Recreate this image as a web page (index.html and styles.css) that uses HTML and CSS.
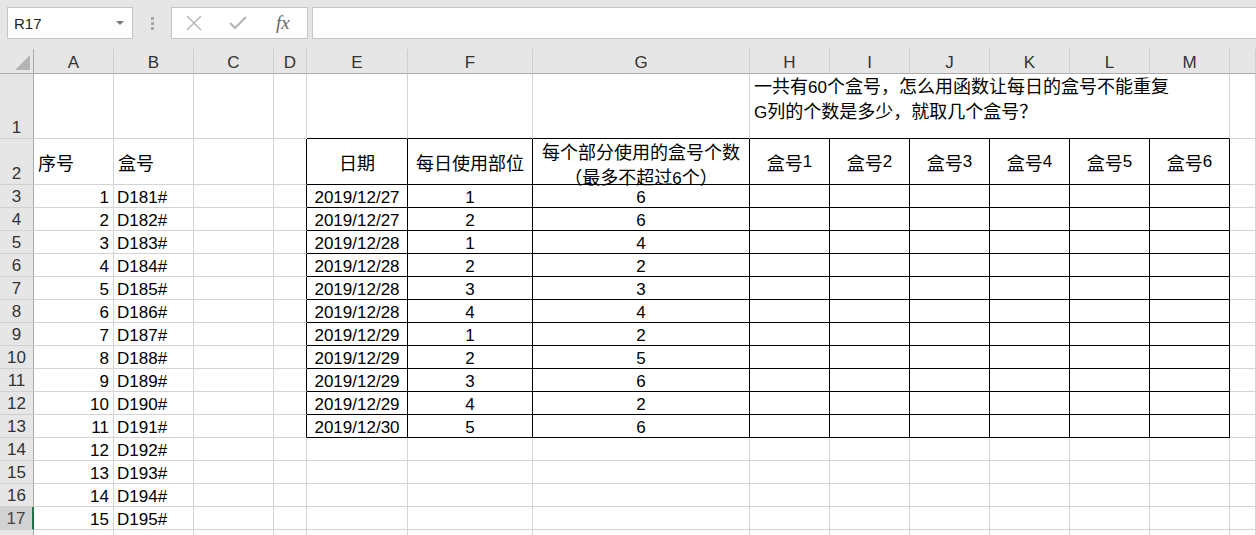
FILE: index.html
```html
<!DOCTYPE html>
<html lang="zh-CN">
<head>
<meta charset="utf-8">
<title>Sheet</title>
<link rel="stylesheet" href="styles.css">
</head>
<body>
<div class="app">
  <div class="toolbar">
    <div class="namebox"><span class="ref">R17</span><span class="caret"></span></div>
    <div class="grip"><i></i><i></i><i></i></div>
    <div class="fxbox">
      <svg class="ico" width="18" height="18" viewBox="0 0 18 18"><path d="M2 2 L16 16 M16 2 L2 16" stroke="#b3b3b3" stroke-width="1.4" fill="none"/></svg>
      <svg class="ico" width="20" height="18" viewBox="0 0 20 18"><path d="M2 9 L7 14 L18 3" stroke="#b3b3b3" stroke-width="2" fill="none"/></svg>
      <span class="fx">fx</span>
    </div>
    <div class="formula"></div>
  </div>

  <div class="sheet">
    <div class="row hdr">
      <div class="corner"><span class="tri"></span></div>
      <div class="ch">A</div><div class="ch">B</div><div class="ch">C</div><div class="ch">D</div><div class="ch">E</div><div class="ch">F</div><div class="ch">G</div><div class="ch">H</div><div class="ch">I</div><div class="ch">J</div><div class="ch">K</div><div class="ch">L</div><div class="ch">M</div><div class="ch"></div>
    </div>

    <div class="row r1">
      <div class="rh">1</div>
      <div class="c"></div><div class="c"></div><div class="c"></div><div class="c"></div>
      <div class="c tb"></div><div class="c tb"></div><div class="c tb"></div>
      <div class="c tb note"><div><span class="zh">一共有</span>60<span class="zh">个盒号，怎么用函数让每日的盒号不能重复</span></div><div>G<span class="zh">列的个数是多少，就取几个盒号？</span></div></div>
      <div class="c"></div>
    </div>

    <div class="row r2">
      <div class="rh">2</div>
      <div class="c mid"><span class="zh">序号</span></div>
      <div class="c mid"><span class="zh">盒号</span></div>
      <div class="c"></div>
      <div class="c tl"></div>
      <div class="c t ctr mid2"><span class="zh">日期</span></div>
      <div class="c t ctr mid2"><span class="zh">每日使用部位</span></div>
      <div class="c t two"><div><span class="zh">每个部分使用的盒号个数</span></div><div><span class="zh">（最多不超过</span>6<span class="zh">个）</span></div></div>
      <div class="c t ctr mid2"><span class="zh">盒号</span>1</div>
      <div class="c t ctr mid2"><span class="zh">盒号</span>2</div>
      <div class="c t ctr mid2"><span class="zh">盒号</span>3</div>
      <div class="c t ctr mid2"><span class="zh">盒号</span>4</div>
      <div class="c t ctr mid2"><span class="zh">盒号</span>5</div>
      <div class="c t ctr mid2"><span class="zh">盒号</span>6</div>
      <div class="c"></div>
    </div>

    <div class="row">
      <div class="rh">3</div><div class="c num">1</div><div class="c txt">D181#</div><div class="c"></div><div class="c tl"></div>
      <div class="c t ctr">2019/12/27</div><div class="c t ctr">1</div><div class="c t ctr">6</div>
      <div class="c t"></div><div class="c t"></div><div class="c t"></div><div class="c t"></div><div class="c t"></div><div class="c t"></div><div class="c"></div>
    </div>
    <div class="row">
      <div class="rh">4</div><div class="c num">2</div><div class="c txt">D182#</div><div class="c"></div><div class="c tl"></div>
      <div class="c t ctr">2019/12/27</div><div class="c t ctr">2</div><div class="c t ctr">6</div>
      <div class="c t"></div><div class="c t"></div><div class="c t"></div><div class="c t"></div><div class="c t"></div><div class="c t"></div><div class="c"></div>
    </div>
    <div class="row">
      <div class="rh">5</div><div class="c num">3</div><div class="c txt">D183#</div><div class="c"></div><div class="c tl"></div>
      <div class="c t ctr">2019/12/28</div><div class="c t ctr">1</div><div class="c t ctr">4</div>
      <div class="c t"></div><div class="c t"></div><div class="c t"></div><div class="c t"></div><div class="c t"></div><div class="c t"></div><div class="c"></div>
    </div>
    <div class="row">
      <div class="rh">6</div><div class="c num">4</div><div class="c txt">D184#</div><div class="c"></div><div class="c tl"></div>
      <div class="c t ctr">2019/12/28</div><div class="c t ctr">2</div><div class="c t ctr">2</div>
      <div class="c t"></div><div class="c t"></div><div class="c t"></div><div class="c t"></div><div class="c t"></div><div class="c t"></div><div class="c"></div>
    </div>
    <div class="row">
      <div class="rh">7</div><div class="c num">5</div><div class="c txt">D185#</div><div class="c"></div><div class="c tl"></div>
      <div class="c t ctr">2019/12/28</div><div class="c t ctr">3</div><div class="c t ctr">3</div>
      <div class="c t"></div><div class="c t"></div><div class="c t"></div><div class="c t"></div><div class="c t"></div><div class="c t"></div><div class="c"></div>
    </div>
    <div class="row">
      <div class="rh">8</div><div class="c num">6</div><div class="c txt">D186#</div><div class="c"></div><div class="c tl"></div>
      <div class="c t ctr">2019/12/28</div><div class="c t ctr">4</div><div class="c t ctr">4</div>
      <div class="c t"></div><div class="c t"></div><div class="c t"></div><div class="c t"></div><div class="c t"></div><div class="c t"></div><div class="c"></div>
    </div>
    <div class="row">
      <div class="rh">9</div><div class="c num">7</div><div class="c txt">D187#</div><div class="c"></div><div class="c tl"></div>
      <div class="c t ctr">2019/12/29</div><div class="c t ctr">1</div><div class="c t ctr">2</div>
      <div class="c t"></div><div class="c t"></div><div class="c t"></div><div class="c t"></div><div class="c t"></div><div class="c t"></div><div class="c"></div>
    </div>
    <div class="row">
      <div class="rh">10</div><div class="c num">8</div><div class="c txt">D188#</div><div class="c"></div><div class="c tl"></div>
      <div class="c t ctr">2019/12/29</div><div class="c t ctr">2</div><div class="c t ctr">5</div>
      <div class="c t"></div><div class="c t"></div><div class="c t"></div><div class="c t"></div><div class="c t"></div><div class="c t"></div><div class="c"></div>
    </div>
    <div class="row">
      <div class="rh">11</div><div class="c num">9</div><div class="c txt">D189#</div><div class="c"></div><div class="c tl"></div>
      <div class="c t ctr">2019/12/29</div><div class="c t ctr">3</div><div class="c t ctr">6</div>
      <div class="c t"></div><div class="c t"></div><div class="c t"></div><div class="c t"></div><div class="c t"></div><div class="c t"></div><div class="c"></div>
    </div>
    <div class="row">
      <div class="rh">12</div><div class="c num">10</div><div class="c txt">D190#</div><div class="c"></div><div class="c tl"></div>
      <div class="c t ctr">2019/12/29</div><div class="c t ctr">4</div><div class="c t ctr">2</div>
      <div class="c t"></div><div class="c t"></div><div class="c t"></div><div class="c t"></div><div class="c t"></div><div class="c t"></div><div class="c"></div>
    </div>
    <div class="row">
      <div class="rh">13</div><div class="c num">11</div><div class="c txt">D191#</div><div class="c"></div><div class="c tl"></div>
      <div class="c t ctr">2019/12/30</div><div class="c t ctr">5</div><div class="c t ctr">6</div>
      <div class="c t"></div><div class="c t"></div><div class="c t"></div><div class="c t"></div><div class="c t"></div><div class="c t"></div><div class="c"></div>
    </div>
    <div class="row">
      <div class="rh">14</div><div class="c num">12</div><div class="c txt">D192#</div><div class="c"></div><div class="c"></div>
      <div class="c"></div><div class="c"></div><div class="c"></div>
      <div class="c"></div><div class="c"></div><div class="c"></div><div class="c"></div><div class="c"></div><div class="c"></div><div class="c"></div>
    </div>
    <div class="row">
      <div class="rh">15</div><div class="c num">13</div><div class="c txt">D193#</div><div class="c"></div><div class="c"></div>
      <div class="c"></div><div class="c"></div><div class="c"></div>
      <div class="c"></div><div class="c"></div><div class="c"></div><div class="c"></div><div class="c"></div><div class="c"></div><div class="c"></div>
    </div>
    <div class="row">
      <div class="rh">16</div><div class="c num">14</div><div class="c txt">D194#</div><div class="c"></div><div class="c"></div>
      <div class="c"></div><div class="c"></div><div class="c"></div>
      <div class="c"></div><div class="c"></div><div class="c"></div><div class="c"></div><div class="c"></div><div class="c"></div><div class="c"></div>
    </div>
    <div class="row">
      <div class="rh active">17</div><div class="c num">15</div><div class="c txt">D195#</div><div class="c"></div><div class="c"></div>
      <div class="c"></div><div class="c"></div><div class="c"></div>
      <div class="c"></div><div class="c"></div><div class="c"></div><div class="c"></div><div class="c"></div><div class="c"></div><div class="c"></div>
    </div>
    <div class="row">
      <div class="rh"></div><div class="c"></div><div class="c"></div><div class="c"></div><div class="c"></div>
      <div class="c"></div><div class="c"></div><div class="c"></div>
      <div class="c"></div><div class="c"></div><div class="c"></div><div class="c"></div><div class="c"></div><div class="c"></div><div class="c"></div>
    </div>
  </div>
</div>
</body>
</html>
```

FILE: styles.css
```css
* { box-sizing: border-box; }
html, body { margin: 0; padding: 0; background: #fff; }
body { width: 1256px; height: 535px; overflow: hidden; font-family: "Liberation Sans", "Noto Sans CJK SC", sans-serif; }
.app { display: flex; flex-direction: column; width: 1256px; }

.toolbar { height: 49px; flex: none; background: #e6e6e6; display: flex; align-items: flex-start; padding-top: 7px; padding-left: 7px; }
.namebox { width: 126px; height: 32px; background: #fff; border: 1px solid #c6c6c6; display: flex; align-items: center; justify-content: space-between; padding: 0 8px 0 6px; }
.ref { font-size: 15px; color: #222; }
.caret { width: 0; height: 0; border-left: 4px solid transparent; border-right: 4px solid transparent; border-top: 4px solid #7a7a7a; }
.grip { width: 38px; height: 32px; display: flex; flex-direction: column; align-items: center; justify-content: center; gap: 2px; }
.grip i { display: block; width: 3px; height: 3px; background: #a8a8a8; }
.fxbox { width: 137px; height: 32px; background: #fff; border: 1px solid #c6c6c6; display: flex; align-items: center; padding-left: 13px; gap: 25px; }
.fx { font-family: "Liberation Serif", serif; font-style: italic; font-size: 19px; color: #666; margin-left: 3px; }
.formula { flex: 1; height: 32px; margin-left: 4px; background: #fff; border: 1px solid #c6c6c6; border-right: none; }

.sheet { display: flex; flex-direction: column; }
.row { display: grid; flex: none; min-height: 0; grid-template-columns: 34px 80px 80px 80px 33px 101px 125px 217px 80px 80px 80px 80px 80px 80px 26px; grid-template-rows: 100%; height: 23px; font-size: 17px; line-height: 22px; color: #000; }
.row.hdr { height: 25px; }
.row.r1 { height: 65px; }
.row.r2 { height: 46px; }

.corner { background: #e6e6e6; border-right: 1px solid #ababab; border-bottom: 1px solid #ababab; position: relative; }
.tri { position: absolute; right: 3px; bottom: 3px; width: 0; height: 0; border-left: 15px solid transparent; border-bottom: 15px solid #b4b4b4; }
.ch { background: #e6e6e6; border-right: 1px solid #cfcfcf; border-bottom: 1px solid #ababab; text-align: center; font-size: 17px; line-height: 22px; padding-top: 3px; color: #333; overflow: hidden; }

.rh { background: #e6e6e6; border-right: 1px solid #ababab; border-bottom: 1px solid #d0d0d0; display: flex; align-items: flex-end; justify-content: center; font-size: 17px; line-height: 20px; color: #333; overflow: hidden; }
.rh.active { background: #d2d2d2; border-right: 2px solid #217346; color: #444; }

.c { border-right: 1px solid #d4d4d4; border-bottom: 1px solid #d4d4d4; white-space: nowrap; display: flex; align-items: center; padding-top: 3px; min-height: 0; }
.c.t { border-right-color: #000; border-bottom-color: #000; }
.c.tb { border-bottom-color: #000; }
.c.tl { border-right-color: #000; }
.c.ctr { justify-content: center; text-align: center; }
.c.num { justify-content: flex-end; padding-right: 4px; }
.c.txt { padding-left: 3px; }
.c.mid { padding-left: 4px; padding-top: 1px; }
.c.mid2 { padding-top: 1px; }
.c.two { display: block; text-align: center; line-height: 22px; padding-top: 1px; }
.c.note { grid-column: span 6; display: block; padding-left: 4px; padding-top: 0; line-height: 23px; }
.zh { font-family: "Noto Sans CJK SC", sans-serif; font-size: 18px; }
```
